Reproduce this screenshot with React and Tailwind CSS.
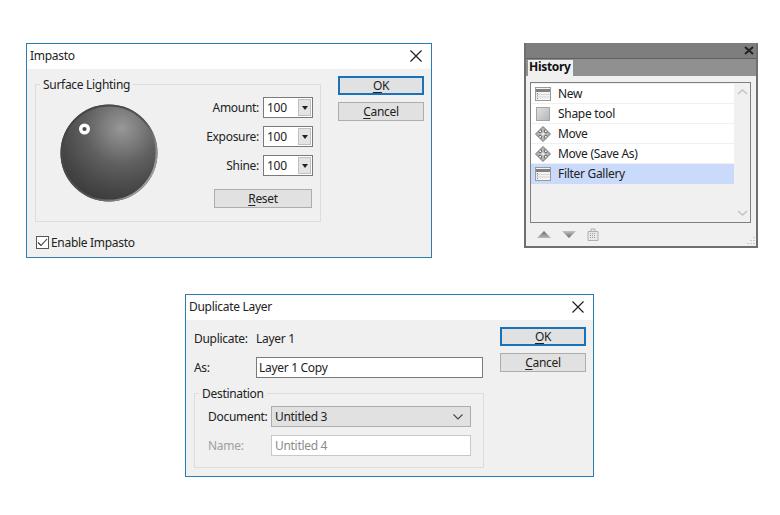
function CloseIcon() {
  return (
    <svg width="12" height="12" viewBox="0 0 12 12" className="block">
      <path d="M0.5 0.5 L11.5 11.5 M11.5 0.5 L0.5 11.5" stroke="#1a1a1a" strokeWidth="1.1" fill="none" />
    </svg>
  )
}

function TitleBar({ title }) {
  return (
    <div className="flex h-[25px] items-center justify-between bg-white pb-[2px] pl-[3px] pr-[9px]">
      <span>{title}</span>
      <CloseIcon />
    </div>
  )
}

function DialogButton({ accel, rest, primary }) {
  return (
    <button
      className={`flex h-[19px] w-[86px] items-center justify-center bg-[#e1e1e1] text-[#222] ${
        primary ? 'border-2 border-[#1a72b8]' : 'border border-[#adadad]'
      }`}
    >
      <span className="underline decoration-1 underline-offset-2">{accel}</span>
      {rest}
    </button>
  )
}

function Stepper({ label }) {
  return (
    <div className="flex items-center justify-end">
      <span className="mr-[4px]">{label}</span>
      <div className="flex h-[21px] w-[50px] items-center justify-between border border-[#7a7a7a] bg-white pl-[3px] pr-px">
        <span>100</span>
        <span className="flex h-[17px] w-[13px] items-center justify-center border border-[#c0c0c0] bg-[#e4e4e4]">
          <svg width="6" height="4" viewBox="0 0 6 4">
            <path d="M0 0 L6 0 L3 4 Z" fill="#222" />
          </svg>
        </span>
      </div>
    </div>
  )
}

function Sphere() {
  return (
    <svg width="98" height="98" viewBox="0 0 98 98" className="block">
      <defs>
        <radialGradient id="sphereBase" gradientUnits="userSpaceOnUse" cx="62" cy="24" r="88">
          <stop offset="0%" stopColor="#989898" />
          <stop offset="18%" stopColor="#808080" />
          <stop offset="42%" stopColor="#5f5f5f" />
          <stop offset="70%" stopColor="#474747" />
          <stop offset="100%" stopColor="#323232" />
        </radialGradient>
        <linearGradient id="sphereRim" x1="0.1" y1="0.2" x2="0.95" y2="0.8">
          <stop offset="0%" stopColor="#444" />
          <stop offset="60%" stopColor="#555" />
          <stop offset="100%" stopColor="#a6a6a6" />
        </linearGradient>
      </defs>
      <circle cx="49" cy="49" r="48.5" fill="url(#sphereBase)" />
      <circle cx="49" cy="49" r="47.5" fill="none" stroke="url(#sphereRim)" strokeWidth="2" />
      <circle cx="24.5" cy="25" r="3.8" fill="#4a4a4a" stroke="#fff" strokeWidth="3.4" />
    </svg>
  )
}

function Impasto() {
  return (
    <div className="absolute left-[26px] top-[43px] flex h-[215px] w-[406px] flex-col border border-[#2b7cb5] bg-[#f0f0f0]">
      <TitleBar title="Impasto" />
      <div className="flex flex-1 pl-[8px] pt-[7px]">
        <div className="flex w-[286px] flex-col">
          <fieldset className="h-[146px] border border-[#dcdcdc]">
            <legend className="ml-[4px] h-[16px] px-[3px] leading-[18px]">Surface Lighting</legend>
            <div className="flex pl-[24px] pr-[7px] pt-[5px]">
              <div className="mt-[7px]">
                <Sphere />
              </div>
              <div className="ml-auto flex w-[120px] flex-col gap-[8px]">
                <Stepper label="Amount:" />
                <Stepper label="Exposure:" />
                <Stepper label="Shine:" />
                <div className="mt-[5px] flex justify-end pr-px">
                  <button className="flex h-[19px] w-[98px] items-center justify-center border border-[#adadad] bg-[#e1e1e1]">
                    <span className="underline decoration-1 underline-offset-2">R</span>eset
                  </button>
                </div>
              </div>
            </div>
          </fieldset>
          <label className="ml-px mt-[14px] flex items-center">
            <span className="flex h-[13px] w-[13px] items-center justify-center border border-[#555] bg-white">
              <svg width="11" height="9" viewBox="0 0 11 9">
                <path d="M1 4.5 L4 7.5 L10 1" stroke="#333" strokeWidth="1.1" fill="none" />
              </svg>
            </span>
            <span className="ml-[2px]">Enable Impasto</span>
          </label>
        </div>
        <div className="ml-[17px] flex flex-col gap-[7px]">
          <DialogButton accel="O" rest="K" primary />
          <DialogButton accel="C" rest="ancel" />
        </div>
      </div>
    </div>
  )
}

function RowIconLayer() {
  return (
    <svg width="16" height="14" viewBox="0 0 16 14" className="block">
      <rect x="0.5" y="0.5" width="15" height="13" fill="#f4f4f4" stroke="#9a9a9a" />
      <rect x="1" y="2" width="14" height="3" fill="#808080" />
      <path d="M2 6.5 H3 M2 9 H3 M2 11.5 H3" stroke="#777" />
      <path d="M1 7.5 H15 M1 10 H15" stroke="#d4d4d4" />
    </svg>
  )
}

function RowIconShape() {
  return (
    <svg width="16" height="14" viewBox="0 0 16 14" className="block">
      <defs>
        <linearGradient id="shapeFill" x1="0" y1="0" x2="1" y2="1">
          <stop offset="0%" stopColor="#e2e2e2" />
          <stop offset="100%" stopColor="#b4b4b4" />
        </linearGradient>
      </defs>
      <rect x="1.5" y="0.5" width="13" height="13" fill="url(#shapeFill)" stroke="#a4a4a4" />
    </svg>
  )
}

function RowIconMove() {
  return (
    <svg width="16" height="16" viewBox="0 0 16 16" className="block">
      <path
        d="M8 0.5 L11.5 4 H9.5 V6.5 H12 V4.5 L15.5 8 L12 11.5 V9.5 H9.5 V12 H11.5 L8 15.5 L4.5 12 H6.5 V9.5 H4 V11.5 L0.5 8 L4 4.5 V6.5 H6.5 V4 H4.5 Z"
        fill="#b4b4b4"
        stroke="#6a6a6a"
        strokeWidth="0.9"
        strokeLinejoin="round"
      />
      <rect x="6.5" y="6.5" width="3" height="3" fill="#e8e8e8" />
    </svg>
  )
}

const historyRows = [
  { label: 'New', icon: RowIconLayer },
  { label: 'Shape tool', icon: RowIconShape },
  { label: 'Move', icon: RowIconMove },
  { label: 'Move (Save As)', icon: RowIconMove },
  { label: 'Filter Gallery', icon: RowIconLayer, selected: true },
]

function HistoryPanel() {
  return (
    <div className="absolute left-[524px] top-[43px] flex h-[205px] w-[234px] flex-col border-x-2 border-b-2 border-[#6f6f6f] bg-[#f0f0f0]">
      <div className="flex h-[15px] items-center justify-end bg-[#7e7e7e] pr-[2px]">
        <svg width="10" height="9" viewBox="0 0 10 9">
          <path d="M1 1 L9 8 M9 1 L1 8" stroke="#222" strokeWidth="2" />
        </svg>
      </div>
      <div className="flex h-[18px] items-end border-t border-[#5f5f5f] bg-[#909090] pl-[2px]">
        <div className="flex h-[16px] w-[45px] items-center bg-[#f0f0f0] pb-[2px] pl-px font-bold text-[#111]">
          History
        </div>
      </div>
      <div className="ml-[4px] mr-[5px] mt-[6px] flex h-[141px] border border-[#7f7f7f] bg-[#f0f0f0]">
        <div className="w-[203px] pt-px">
          {historyRows.map((row) => {
            const Icon = row.icon
            return (
              <div
                key={row.label}
                className={`flex h-[20px] items-center border-b ${
                  row.selected ? 'border-transparent bg-[#c9dafb]' : 'border-[#f0f0f0] bg-white'
                }`}
              >
                <div className="flex w-[27px] justify-center pr-[3px]">
                  <Icon />
                </div>
                <span>{row.label}</span>
              </div>
            )
          })}
        </div>
        <div className="flex flex-1 flex-col items-center justify-between py-[6px]">
          <svg width="11" height="6" viewBox="0 0 11 6">
            <path d="M1 5 L5.5 1 L10 5" stroke="#c4c4c4" strokeWidth="1.6" fill="none" />
          </svg>
          <svg width="11" height="6" viewBox="0 0 11 6">
            <path d="M1 1 L5.5 5 L10 1" stroke="#c4c4c4" strokeWidth="1.6" fill="none" />
          </svg>
        </div>
      </div>
      <div className="relative flex flex-1 items-center gap-[11px] pl-[11px]">
        <svg width="14" height="7" viewBox="0 0 14 7">
          <defs>
            <linearGradient id="arrowUp" x1="0" y1="0" x2="0" y2="1">
              <stop offset="0%" stopColor="#6a6a6a" />
              <stop offset="100%" stopColor="#b8b8b8" />
            </linearGradient>
            <linearGradient id="arrowDown" x1="0" y1="0" x2="0" y2="1">
              <stop offset="0%" stopColor="#c4c4c4" />
              <stop offset="100%" stopColor="#666" />
            </linearGradient>
          </defs>
          <path d="M7 0 L14 7 H0 Z" fill="url(#arrowUp)" />
        </svg>
        <svg width="14" height="7" viewBox="0 0 14 7">
          <path d="M0 0 H14 L7 7 Z" fill="url(#arrowDown)" />
        </svg>
        <svg width="12" height="13" viewBox="0 0 12 13">
          <path d="M1 3.5 H11 V12.5 H1 Z M4 3.5 V1 H8 V3.5" fill="#e8e8e8" stroke="#b0b0b0" />
          <path d="M3 5.5 H9 M3 7.5 H9 M3 9.5 H9" stroke="#a0a0a0" strokeDasharray="1 1" />
        </svg>
        <svg width="9" height="9" viewBox="0 0 9 9" className="absolute bottom-[1px] right-[1px]">
          <path d="M8 1 V2 M5 4 V5 M8 4 V5 M2 7 V8 M5 7 V8 M8 7 V8" stroke="#a8a8a8" />
        </svg>
      </div>
    </div>
  )
}

function DuplicateLayer() {
  return (
    <div className="absolute left-[185px] top-[294px] flex h-[183px] w-[409px] flex-col border border-[#2b7cb5] bg-[#f0f0f0]">
      <TitleBar title="Duplicate Layer" />
      <div className="flex flex-1 pl-[8px]">
        <div className="flex w-[290px] flex-col">
          <div className="mt-[11px] flex h-[16px] items-center">
            <span className="w-[62px]">Duplicate:</span>
            <span>Layer 1</span>
          </div>
          <div className="mt-[10px] flex items-center">
            <span className="w-[62px]">As:</span>
            <div className="flex h-[21px] w-[227px] items-center border border-[#7a7a7a] bg-white pl-[2px]">
              Layer 1 Copy
            </div>
          </div>
          <fieldset className="mt-[7px] h-[83px] border border-[#dcdcdc]">
            <legend className="ml-[4px] h-[16px] px-[3px] leading-[18px]">Destination</legend>
            <div className="flex flex-col gap-[8px] pl-[13px] pt-[5px]">
              <div className="flex items-center">
                <span className="w-[63px]">Document:</span>
                <div className="flex h-[21px] w-[200px] items-center justify-between border border-[#adadad] bg-[#e1e1e1] pl-[3px] pr-[7px]">
                  <span>Untitled 3</span>
                  <svg width="10" height="6" viewBox="0 0 10 6">
                    <path d="M0.5 0.5 L5 5 L9.5 0.5" stroke="#444" strokeWidth="1.1" fill="none" />
                  </svg>
                </div>
              </div>
              <div className="flex items-center text-[#a0a0a0]">
                <span className="w-[63px]">Name:</span>
                <div className="flex h-[21px] w-[200px] items-center border border-[#c8c8c8] bg-white pl-[3px] text-[#8c8c8c]">
                  Untitled 4
                </div>
              </div>
            </div>
          </fieldset>
        </div>
        <div className="ml-[16px] mt-[7px] flex flex-col gap-[7px]">
          <DialogButton accel="O" rest="K" primary />
          <DialogButton accel="C" rest="ancel" />
        </div>
      </div>
    </div>
  )
}

export default function App() {
  return (
    <div className="relative h-[515px] w-[780px] overflow-hidden bg-white font-['Noto_Sans',sans-serif] text-[12px] leading-none tracking-[-0.3px] text-[#222]">
      <Impasto />
      <HistoryPanel />
      <DuplicateLayer />
    </div>
  )
}
